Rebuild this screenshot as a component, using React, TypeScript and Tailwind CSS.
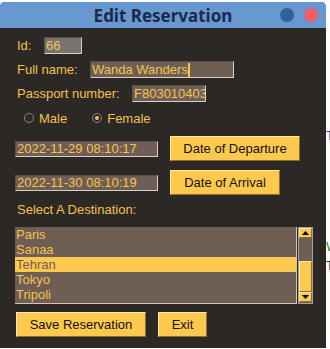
import { useState } from "react";

const cities = ["Paris", "Sanaa", "Tehran", "Tokyo", "Tripoli"];

function Field({ value, width, height = "h-[17px]", bg = "bg-[#6e5e54]", cursor = false }: { value: string; width: string; height?: string; bg?: string; cursor?: boolean }) {
  return (
    <div className={`${width} ${height} ${bg} border border-t-[#5a504a] border-l-[#5a504a] border-b-[#d8d0c8] border-r-[#d8d0c8] flex items-center pl-[1px] text-[13px] leading-none text-[#f6c54e] overflow-hidden`}>
      <span>{value}</span>
      {cursor && <span className="w-[2px] h-[14px] bg-[#f6c54e]" />}
    </div>
  );
}

function Btn({ label, width }: { label: string; width: string }) {
  return (
    <button
      type="button"
      className={`${width} h-[25px] bg-[#fcc94f] border border-t-[#ffe8a2] border-l-[#ffe8a2] border-b-[#8c6f2a] border-r-[#8c6f2a] text-[13px] text-[#111] flex items-center justify-center`}
    >
      {label}
    </button>
  );
}

export default function App() {
  const [gender, setGender] = useState("female");
  const [selected, setSelected] = useState("Tehran");

  return (
    <div className="w-[330px] h-[349px] bg-white flex overflow-hidden leading-none" style={{ fontFamily: '"Liberation Sans", Arial, sans-serif' }}>
      <div className="w-[326px] mt-[2px] h-[346px] flex flex-col rounded-t-[5px] overflow-hidden bg-[#2c2825]">
        {/* title bar */}
        <div className="h-[26px] shrink-0 bg-[#6898d0] grid grid-cols-[1fr_auto_1fr] items-center">
          <div />
          <div className="text-[17px] font-bold text-[#1c2a48] leading-none" style={{ fontFamily: '"Noto Sans", sans-serif' }}>
            Edit Reservation
          </div>
          <div className="flex justify-end items-center gap-[10px] pr-[8px]">
            <span className="w-[14px] h-[14px] rounded-full bg-[#30609e]" />
            <span className="w-[14px] h-[14px] rounded-full bg-[#ef5f68]" />
          </div>
        </div>

        <div className="flex flex-col text-[13px] text-[#f4c24d]">
          <div className="flex items-center h-[17px] mt-[9px] pl-[17px]">
            <span className="w-[27px]">Id:</span>
            <Field value="66" width="w-[38px]" bg="bg-[#777470]" />
          </div>
          <div className="flex items-center h-[17px] mt-[7px] pl-[17px]">
            <span className="w-[73px]">Full name:</span>
            <Field value="Wanda Wanders" width="w-[144px]" cursor />
          </div>
          <div className="flex items-center h-[17px] mt-[7px] pl-[17px]">
            <span className="w-[115px]">Passport number:</span>
            <Field value="F803010403" width="w-[74px]" />
          </div>

          <div className="flex items-center mt-[9px] pl-[24px] h-[14px]">
            <button type="button" onClick={() => setGender("male")} className="flex items-center gap-[5px]">
              <span className="w-[10px] h-[10px] rounded-full border border-[#8a8680] bg-[#2c2825] flex items-center justify-center">
                {gender === "male" && <span className="w-[4px] h-[4px] rounded-full bg-[#f4c24d]" />}
              </span>
              <span>Male</span>
            </button>
            <button type="button" onClick={() => setGender("female")} className="flex items-center gap-[5px] ml-[25px]">
              <span className="w-[10px] h-[10px] rounded-full border border-[#8a8680] bg-[#2c2825] flex items-center justify-center">
                {gender === "female" && <span className="w-[4px] h-[4px] rounded-full bg-[#f4c24d]" />}
              </span>
              <span>Female</span>
            </button>
          </div>

          <div className="flex items-center h-[25px] mt-[11px] pl-[15px] gap-[12px]">
            <Field value="2022-11-29 08:10:17" width="w-[143px]" height="h-[16px]" />
            <Btn label="Date of Departure" width="w-[130px]" />
          </div>
          <div className="flex items-center h-[25px] mt-[9px] pl-[15px] gap-[12px]">
            <Field value="2022-11-30 08:10:19" width="w-[143px]" height="h-[16px]" />
            <Btn label="Date of Arrival" width="w-[110px]" />
          </div>

          <div className="mt-[7px] pl-[17px] h-[15px] leading-[15px]">Select A Destination:</div>

          <div className="flex mt-[10px] ml-[15px] gap-[1px]">
            <div className="w-[282px] h-[77px] bg-[#6e5e54] border-b border-r border-b-[#d0c8c0] border-r-[#d0c8c0]">
              {cities.map((c) => (
                <div
                  key={c}
                  onClick={() => setSelected(c)}
                  className={`h-[15px] leading-[15px] pl-[1px] text-[13px] ${selected === c ? "bg-[#fcc94f] text-[#6e5e54]" : "text-[#f4c24d]"}`}
                >
                  {c}
                </div>
              ))}
            </div>
            <div className="w-[15px] h-[77px] bg-[#6e5e54] border border-[#a8a098] flex flex-col">
              <div className="h-[10px] bg-[#fcc94f] border border-t-[#ffe8a2] border-l-[#ffe8a2] border-b-[#8c6f2a] border-r-[#8c6f2a] flex items-center justify-center">
                <svg width="7" height="4" viewBox="0 0 7 4"><polygon points="3.5,0 7,4 0,4" fill="#000" /></svg>
              </div>
              <div className="h-[23px]" />
              <div className="h-[31px] bg-[#fcc94f] border border-t-[#ffe8a2] border-l-[#ffe8a2] border-b-[#8c6f2a] border-r-[#8c6f2a]" />
              <div className="h-[10px] bg-[#fcc94f] border border-t-[#ffe8a2] border-l-[#ffe8a2] border-b-[#8c6f2a] border-r-[#8c6f2a] flex items-center justify-center">
                <svg width="7" height="4" viewBox="0 0 7 4"><polygon points="0,0 7,0 3.5,4" fill="#000" /></svg>
              </div>
            </div>
          </div>

          <div className="flex mt-[8px] ml-[16px] gap-[12px]">
            <Btn label="Save Reservation" width="w-[130px]" />
            <Btn label="Exit" width="w-[49px]" />
          </div>
        </div>
      </div>
      <div className="flex-1 overflow-hidden flex flex-col text-[13px] leading-none">
        <span className="mt-[129px] text-[#1e40c0]">T</span>
        <span className="mt-[98px] text-[#1a8a30]">W</span>
        <span className="mt-[6px] text-[#1c2a60]">T</span>
      </div>
    </div>
  );
}
